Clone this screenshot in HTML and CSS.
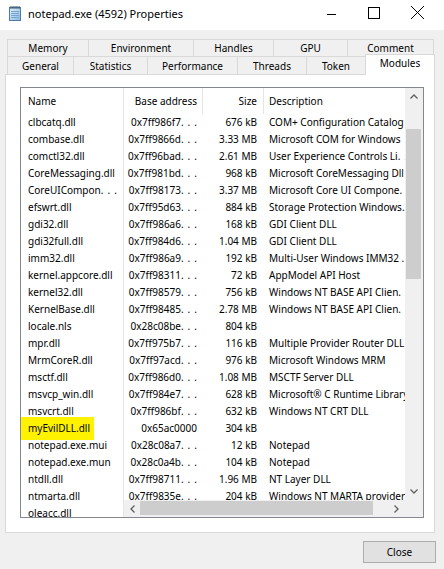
FILE: index.html
```html
<!DOCTYPE html>
<html>
<head>
<meta charset="utf-8">
<title>notepad.exe (4592) Properties</title>
<link rel="stylesheet" href="styles.css">
</head>
<body>
<div class="titlebar">
  <svg class="appicon" width="16" height="16" viewBox="0 0 16 16">
    <defs><linearGradient id="pad" x1="0" y1="0" x2="1" y2="1"><stop offset="0" stop-color="#e2f1fd"/><stop offset="1" stop-color="#86b9e2"/></linearGradient></defs>
    <rect x="2.5" y="2.5" width="11" height="13" fill="url(#pad)" stroke="#4f7ca6"/>
    <path d="M4 6.5h8M4 8.5h8M4 10.5h8M4 12.5h8" stroke="#79a5cb" stroke-width="1"/>
    <path d="M4 1v3M6 1v3M8 1v3M10 1v3M12 1v3" stroke="#3b5168" stroke-width="1"/>
  </svg>
  <div class="title">notepad.exe (4592) Properties</div>
  <div class="controls">
    <svg class="ctl" width="43" height="30" viewBox="0 0 43 30"><path d="M17 14.5h9" stroke="#000" stroke-width="1"/></svg>
    <svg class="ctl" width="43" height="30" viewBox="0 0 43 30"><rect x="15.5" y="7.5" width="11" height="11" fill="none" stroke="#000" stroke-width="1"/></svg>
    <svg class="ctl" width="43" height="30" viewBox="0 0 43 30"><path d="M15 6L28 19M28 6L15 19" stroke="#000" stroke-width="1"/></svg>
  </div>
</div>

<div class="tabs">
  <div class="trow r1">
    <div class="tab w-memory">Memory</div>
    <div class="tab w-env">Environment</div>
    <div class="tab w-handles">Handles</div>
    <div class="tab w-gpu">GPU</div>
    <div class="tab w-comment last">Comment</div>
  </div>
  <div class="trow r2">
    <div class="tab w-general">General</div>
    <div class="tab w-stats">Statistics</div>
    <div class="tab w-perf">Performance</div>
    <div class="tab w-threads">Threads</div>
    <div class="tab w-token">Token</div>
    <div class="tab sel">Modules</div>
  </div>
</div>

<div class="panel">
  <div class="list">
    <div class="fixed">
      <div class="hcell">Name</div>
      <div class="nrow">clbcatq.dll</div>
      <div class="nrow">combase.dll</div>
      <div class="nrow">comctl32.dll</div>
      <div class="nrow">CoreMessaging.dll</div>
      <div class="nrow">CoreUICompon<span class="el">..</span>.</div>
      <div class="nrow">efswrt.dll</div>
      <div class="nrow">gdi32.dll</div>
      <div class="nrow">gdi32full.dll</div>
      <div class="nrow">imm32.dll</div>
      <div class="nrow">kernel.appcore.dll</div>
      <div class="nrow">kernel32.dll</div>
      <div class="nrow">KernelBase.dll</div>
      <div class="nrow">locale.nls</div>
      <div class="nrow">mpr.dll</div>
      <div class="nrow">MrmCoreR.dll</div>
      <div class="nrow">msctf.dll</div>
      <div class="nrow">msvcp_win.dll</div>
      <div class="nrow">msvcrt.dll</div>
      <div class="nrow"><span class="hl">myEvilDLL.dll</span></div>
      <div class="nrow">notepad.exe.mui</div>
      <div class="nrow">notepad.exe.mun</div>
      <div class="nrow">ntdll.dll</div>
      <div class="nrow">ntmarta.dll</div>
      <div class="nrow">oleacc.dll</div>
    </div>
    <div class="main">
      <div class="upper">
        <div class="viewport">
          <div class="hrow"><div class="base">Base address</div><div class="size">Size</div><div class="desc">Description</div></div>
          <div class="row"><span class="base">0x7ff986f7<span class="el">..</span>.</span><span class="size">676 kB</span><span class="desc">COM+ Configuration Catalog</span></div>
          <div class="row"><span class="base">0x7ff9866d<span class="el">..</span>.</span><span class="size">3.33 MB</span><span class="desc">Microsoft COM for Windows</span></div>
          <div class="row"><span class="base">0x7ff96bad<span class="el">..</span>.</span><span class="size">2.61 MB</span><span class="desc">User Experience Controls Li<span class="el">..</span>.</span></div>
          <div class="row"><span class="base">0x7ff981bd<span class="el">..</span>.</span><span class="size">968 kB</span><span class="desc">Microsoft CoreMessaging Dll</span></div>
          <div class="row"><span class="base">0x7ff98173<span class="el">..</span>.</span><span class="size">3.37 MB</span><span class="desc">Microsoft Core UI Compone<span class="el">..</span>.</span></div>
          <div class="row"><span class="base">0x7ff95d63<span class="el">..</span>.</span><span class="size">884 kB</span><span class="desc">Storage Protection Windows<span class="el">..</span>.</span></div>
          <div class="row"><span class="base">0x7ff986a6<span class="el">..</span>.</span><span class="size">168 kB</span><span class="desc">GDI Client DLL</span></div>
          <div class="row"><span class="base">0x7ff984d6<span class="el">..</span>.</span><span class="size">1.04 MB</span><span class="desc">GDI Client DLL</span></div>
          <div class="row"><span class="base">0x7ff986a9<span class="el">..</span>.</span><span class="size">192 kB</span><span class="desc">Multi-User Windows IMM32 <span class="el">..</span>.</span></div>
          <div class="row"><span class="base">0x7ff98311<span class="el">..</span>.</span><span class="size">72 kB</span><span class="desc">AppModel API Host</span></div>
          <div class="row"><span class="base">0x7ff98579<span class="el">..</span>.</span><span class="size">756 kB</span><span class="desc">Windows NT BASE API Clien<span class="el">..</span>.</span></div>
          <div class="row"><span class="base">0x7ff98485<span class="el">..</span>.</span><span class="size">2.78 MB</span><span class="desc">Windows NT BASE API Clien<span class="el">..</span>.</span></div>
          <div class="row"><span class="base">0x28c08be<span class="el">..</span>.</span><span class="size">804 kB</span><span class="desc"></span></div>
          <div class="row"><span class="base">0x7ff975b7<span class="el">..</span>.</span><span class="size">116 kB</span><span class="desc">Multiple Provider Router DLL</span></div>
          <div class="row"><span class="base">0x7ff97acd<span class="el">..</span>.</span><span class="size">976 kB</span><span class="desc">Microsoft Windows MRM</span></div>
          <div class="row"><span class="base">0x7ff986d0<span class="el">..</span>.</span><span class="size">1.08 MB</span><span class="desc">MSCTF Server DLL</span></div>
          <div class="row"><span class="base">0x7ff984e7<span class="el">..</span>.</span><span class="size">628 kB</span><span class="desc">Microsoft® C Runtime Library</span></div>
          <div class="row"><span class="base">0x7ff986bf<span class="el">..</span>.</span><span class="size">632 kB</span><span class="desc">Windows NT CRT DLL</span></div>
          <div class="row"><span class="base">0x65ac0000</span><span class="size">304 kB</span><span class="desc"></span></div>
          <div class="row"><span class="base">0x28c08a7<span class="el">..</span>.</span><span class="size">12 kB</span><span class="desc">Notepad</span></div>
          <div class="row"><span class="base">0x28c0a4b<span class="el">..</span>.</span><span class="size">104 kB</span><span class="desc">Notepad</span></div>
          <div class="row"><span class="base">0x7ff98711<span class="el">..</span>.</span><span class="size">1.96 MB</span><span class="desc">NT Layer DLL</span></div>
          <div class="row"><span class="base">0x7ff9835e<span class="el">..</span>.</span><span class="size">204 kB</span><span class="desc">Windows NT MARTA provider</span></div>
          <div class="row"><span class="base">0x7ff98360<span class="el">..</span>.</span><span class="size">452 kB</span><span class="desc">Active Accessibility Core</span></div>
        </div>
        <div class="vscroll">
          <div class="sbtn"><svg width="8" height="5" viewBox="0 0 8 5"><polyline points="0.5,4.5 4,1 7.5,4.5" fill="none" stroke="#606060" stroke-width="1.3"/></svg></div>
          <div class="vtrack"><div class="vthumb"></div></div>
          <div class="sbtn"><svg width="8" height="5" viewBox="0 0 8 5"><polyline points="0.5,0.5 4,4 7.5,0.5" fill="none" stroke="#606060" stroke-width="1.3"/></svg></div>
        </div>
      </div>
      <div class="lower">
        <div class="hscroll">
          <div class="sbtn hl-btn"><svg width="5" height="8" viewBox="0 0 5 8"><polyline points="4.5,0.5 1,4 4.5,7.5" fill="none" stroke="#606060" stroke-width="1.3"/></svg></div>
          <div class="htrack"><div class="hthumb"></div></div>
          <div class="sbtn hr-btn"><svg width="5" height="8" viewBox="0 0 5 8"><polyline points="0.5,0.5 4,4 0.5,7.5" fill="none" stroke="#606060" stroke-width="1.3"/></svg></div>
        </div>
        <div class="corner"></div>
      </div>
    </div>
  </div>
</div>

<div class="btnrow">
  <div class="btn">Close</div>
</div>
</body>
</html>
```

FILE: styles.css
```css
* { box-sizing: border-box; }

body {
  margin: 0;
  width: 444px;
  height: 569px;
  overflow: hidden;
  background: #f0f0f0;
  font-family: "Noto Sans", "Open Sans", sans-serif;
  font-size: 10px;
  color: #000;
}

/* title bar */
.titlebar {
  height: 30px;
  background: #fff;
  display: flex;
  align-items: flex-start;
}
.appicon { margin: 5px 5px 0 7px; flex: none; }
.title { font-size: 11px; line-height: 28px; white-space: nowrap; }
.controls { margin-left: auto; margin-right: 5px; display: flex; }
.ctl { display: block; }

/* tabs */
.tabs { margin: 9px 0 0 7px; }
.trow { display: flex; }
.r1 { height: 17px; }
.r2 { height: 18px; align-items: flex-end; }
.tab {
  flex: none;
  border-top: 1px solid #d9d9d9;
  border-left: 1px solid #d9d9d9;
  text-align: center;
  white-space: nowrap;
}
.r1 .tab { height: 17px; line-height: 17px; }
.r2 .tab { height: 18px; line-height: 19px; }
.tab.last { border-right: 1px solid #d9d9d9; }
.w-memory { width: 81px; }
.w-env { width: 105px; }
.w-handles { width: 80px; }
.w-gpu { width: 74px; }
.w-comment { width: 87px; }
.w-general { width: 66px; }
.w-stats { width: 74px; }
.w-perf { width: 90px; }
.w-threads { width: 69px; }
.w-token { width: 59px; }
.r2 .tab.sel {
  width: 70px;
  height: 21px;
  line-height: 17px;
  margin-bottom: -1px;
  background: #fff;
  border-right: 1px solid #d9d9d9;
  position: relative;
  z-index: 1;
}

/* panel */
.panel {
  margin-left: 5px;
  width: 430px;
  height: 459px;
  background: #fff;
  border: 1px solid #d9d9d9;
  padding: 12px 0 0 14px;
}
.list {
  width: 404px;
  height: 431px;
  border: 1px solid #828790;
  background: #fff;
  display: flex;
  overflow: hidden;
}

.fixed {
  width: 103px;
  flex: none;
  border-right: 1px solid #e5e5e5;
  overflow: hidden;
}
.hcell { height: 26px; line-height: 26px; padding-left: 7px; }
.nrow { height: 17px; line-height: 17px; padding-left: 7px; white-space: nowrap; }

.hl {
  background: #fff200;
  padding: 4px 4px 5px 7px;
  margin-left: -7px;
}
.el { letter-spacing: 4px; }

.main { width: 299px; flex: none; display: flex; flex-direction: column; }
.upper { height: 412px; display: flex; }
.viewport { width: 281px; flex: none; overflow: hidden; }
.hrow, .row { display: flex; white-space: nowrap; }
.hrow { height: 26px; line-height: 26px; }
.row { height: 17px; line-height: 17px; }
.base { width: 79px; flex: none; text-align: right; padding-right: 6px; }
.size { width: 61px; flex: none; text-align: right; padding-right: 7px; }
.desc { flex: none; padding-left: 5px; }
.hrow .base { border-right: 1px solid #e5e5e5; padding-right: 5px; }
.hrow .size { border-right: 1px solid #e5e5e5; padding-right: 6px; }

/* scrollbars */
.vscroll {
  width: 18px;
  flex: none;
  background: #f0f0f0;
  display: flex;
  flex-direction: column;
}
.sbtn {
  height: 17px;
  flex: none;
  display: flex;
  align-items: center;
  justify-content: center;
}
.sbtn svg { display: block; }
.vtrack { flex: 1; padding-top: 24px; }
.vthumb { width: 15px; height: 150px; margin-left: 1px; background: #cdcdcd; }

.lower { height: 17px; display: flex; }
.hscroll { width: 281px; flex: none; display: flex; background: #f0f0f0; }
.hl-btn { width: 16px; }
.hr-btn { width: 17px; }
.htrack { flex: 1; }
.hthumb { width: 233px; height: 14px; margin-top: 1px; background: #cdcdcd; }
.corner { width: 18px; background: #f0f0f0; }

/* bottom button */
.btnrow { display: flex; justify-content: flex-end; padding: 8px 8px 0 0; }
.btn {
  width: 73px;
  height: 22px;
  border: 1px solid #adadad;
  background: #e1e1e1;
  line-height: 20px;
  text-align: center;
}
```
